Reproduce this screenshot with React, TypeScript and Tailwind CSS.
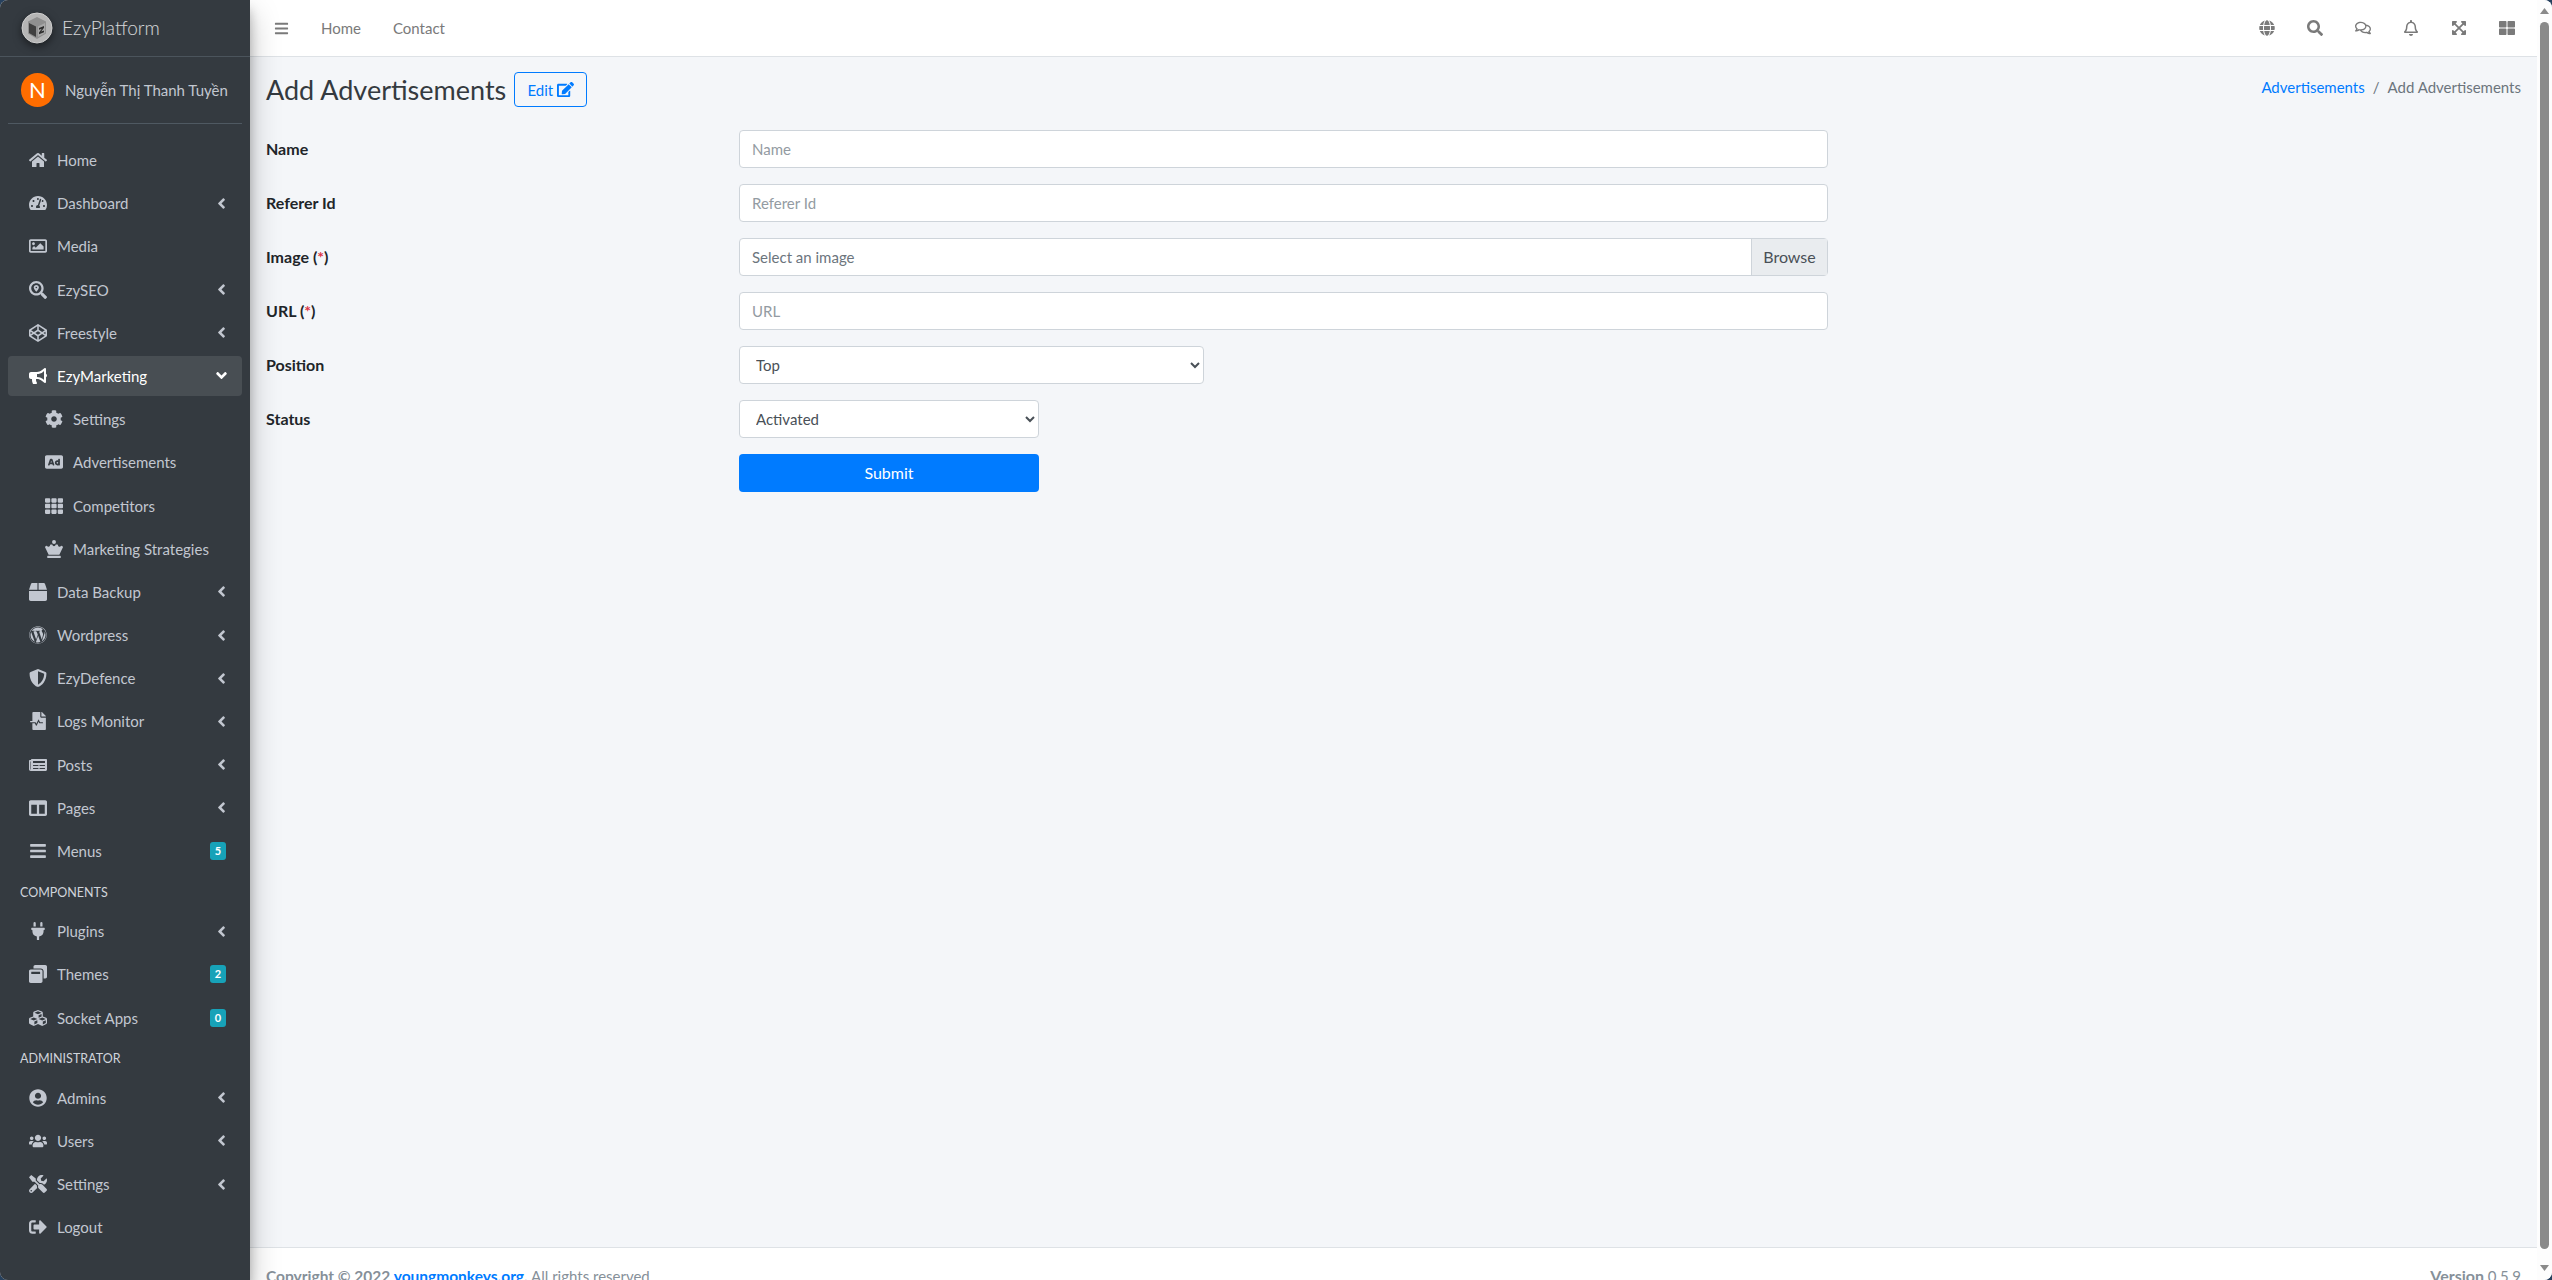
import {
  FaAd, FaAngleDown, FaAngleLeft, FaBars, FaBox, FaBullhorn, FaChessQueen, FaCodepen, FaCog, FaColumns,
  FaCubes, FaEdit, FaExpandArrowsAlt, FaFileMedicalAlt, FaGlobe, FaHome, FaNewspaper, FaPlug, FaRegBell,
  FaRegComments, FaRegImage, FaSearch, FaSearchLocation, FaShieldAlt, FaSignOutAlt, FaTachometerAlt, FaTh,
  FaThLarge, FaTools, FaUserCircle, FaUsers, FaWindowRestore, FaWordpress,
} from "react-icons/fa";
import type { IconType } from "react-icons";

interface NavRow {
  label: string;
  icon: IconType;
  arrow?: boolean;
  badge?: string;
  active?: boolean;
  sub?: boolean;
}

const mainNav: NavRow[] = [
  { label: "Home", icon: FaHome },
  { label: "Dashboard", icon: FaTachometerAlt, arrow: true },
  { label: "Media", icon: FaRegImage },
  { label: "EzySEO", icon: FaSearchLocation, arrow: true },
  { label: "Freestyle", icon: FaCodepen, arrow: true },
  { label: "EzyMarketing", icon: FaBullhorn, arrow: true, active: true },
  { label: "Settings", icon: FaCog, sub: true },
  { label: "Advertisements", icon: FaAd, sub: true },
  { label: "Competitors", icon: FaTh, sub: true },
  { label: "Marketing Strategies", icon: FaChessQueen, sub: true },
  { label: "Data Backup", icon: FaBox, arrow: true },
  { label: "Wordpress", icon: FaWordpress, arrow: true },
  { label: "EzyDefence", icon: FaShieldAlt, arrow: true },
  { label: "Logs Monitor", icon: FaFileMedicalAlt, arrow: true },
  { label: "Posts", icon: FaNewspaper, arrow: true },
  { label: "Pages", icon: FaColumns, arrow: true },
  { label: "Menus", icon: FaBars, badge: "5" },
];

const componentNav: NavRow[] = [
  { label: "Plugins", icon: FaPlug, arrow: true },
  { label: "Themes", icon: FaWindowRestore, badge: "2" },
  { label: "Socket Apps", icon: FaCubes, badge: "0" },
];

const adminNav: NavRow[] = [
  { label: "Admins", icon: FaUserCircle, arrow: true },
  { label: "Users", icon: FaUsers, arrow: true },
  { label: "Settings", icon: FaTools, arrow: true },
  { label: "Logout", icon: FaSignOutAlt },
];

function SidebarRow({ row }: { row: NavRow }) {
  const Icon = row.icon;
  return (
    <a
      className={
        "flex h-10 items-center rounded mb-[3.2px] " +
        (row.active ? "bg-white/10 text-white" : "text-[#c2c7d0]")
      }
    >
      <span className={"flex w-[20px] justify-center shrink-0 text-[18px] " + (row.sub ? "ml-[36px]" : "ml-[20px]")}>
        <Icon />
      </span>
      <span className="ml-[9px] flex-1 whitespace-nowrap">{row.label}</span>
      {row.arrow && (
        <span className="mr-[12px] text-[17px]">{row.active ? <FaAngleDown /> : <FaAngleLeft />}</span>
      )}
      {row.badge && (
        <span className="mr-[16px] flex h-[18px] w-4 items-center justify-center rounded-[3px] bg-[#17a2b8] text-[11px] font-bold text-white">
          {row.badge}
        </span>
      )}
    </a>
  );
}

function Logo() {
  return (
    <svg width="34" height="34" viewBox="0 0 34 34" className="shrink-0 drop-shadow-[0_3px_4px_rgba(0,0,0,0.5)]">
      <circle cx="17" cy="17" r="15" fill="#b5b5b5" />
      <circle cx="17" cy="17" r="15" fill="none" stroke="#d0d0d0" strokeWidth="1" />
      <path d="M17 6l9 4.500v12L17 28l-9-5.500v-12z" fill="#8f8f8f" />
      <path d="M9 12l7 3.500V26l-7-4z" fill="#3f3f3f" />
      <path d="M18 15.500l7-3.500v10l-7 4z" fill="#a8a8a8" />
      <path d="M19 17l5-2v1.800l-2.800 3.600 2.800-1v1.800l-5 2v-1.800l2.800-3.600-2.800 1z" fill="#2e2e2e" />
    </svg>
  );
}

function Sidebar() {
  return (
    <aside className="relative z-10 flex w-[250px] shrink-0 flex-col overflow-hidden bg-[#343a40] shadow-[0_14px_28px_rgba(0,0,0,0.25),0_10px_10px_rgba(0,0,0,0.22)]">
      <div className="flex h-[57px] shrink-0 items-center gap-[8px] border-b border-[#4b545c] pl-[20px]">
        <Logo />
        <span className="text-[19px] font-light text-white/80">EzyPlatform</span>
      </div>
      <div className="mx-2 flex h-[67px] shrink-0 items-center border-b border-[#4f5962] pl-[13px]">
        <span className="flex h-[34px] w-[33px] items-center justify-center rounded-full bg-[#ff6d00] text-[22px] text-white">
          N
        </span>
        <span className="ml-[11px] whitespace-nowrap text-[#c2c7d0]">Nguyễn Thị Thanh Tuyền</span>
      </div>
      <nav className="mt-4 px-2">
        {mainNav.map((row) => (
          <SidebarRow key={row.label} row={row} />
        ))}
        <div className="flex h-[37px] items-center pl-3 text-[12.500px] text-[#d0d4db]">COMPONENTS</div>
        {componentNav.map((row) => (
          <SidebarRow key={row.label} row={row} />
        ))}
        <div className="flex h-[37px] items-center pl-3 text-[12.500px] text-[#d0d4db]">ADMINISTRATOR</div>
        {adminNav.map((row) => (
          <SidebarRow key={row.label} row={row} />
        ))}
      </nav>
    </aside>
  );
}

function Header() {
  const icons = [FaGlobe, FaSearch, FaRegComments, FaRegBell, FaExpandArrowsAlt, FaThLarge];
  return (
    <header className="flex h-[57px] shrink-0 items-center border-b border-[#dee2e6] bg-white pl-[24px] pr-[22px] text-[#7a7a7a]">
      <FaBars className="text-[15px]" />
      <span className="ml-[32px]">Home</span>
      <span className="ml-[32px]">Contact</span>
      <div className="ml-auto flex items-center gap-[32px] text-[16px]">
        {icons.map((Icon, i) => (
          <Icon key={i} />
        ))}
      </div>
    </header>
  );
}

function FormRow({ label, children }: { label: React.ReactNode; children: React.ReactNode }) {
  return (
    <div className="mb-4 flex items-center">
      <label className="w-[473px] shrink-0 text-[16px] font-bold text-[#212529]">{label}</label>
      {children}
    </div>
  );
}

const inputClass =
  "h-[38px] w-[1089px] rounded border border-[#ced4da] bg-white px-3 text-[#495057] placeholder:text-[#939ba2]";

function AddForm() {
  return (
    <form className="mt-[23px]">
      <FormRow label="Name">
        <input className={inputClass} placeholder="Name" />
      </FormRow>
      <FormRow label="Referer Id">
        <input className={inputClass} placeholder="Referer Id" />
      </FormRow>
      <FormRow
        label={
          <>
            Image (<span className="text-[#dc3545]">*</span>)
          </>
        }
      >
        <div className="flex h-[38px] w-[1089px] rounded border border-[#ced4da] bg-white">
          <span className="flex flex-1 items-center px-3 text-[#6c757d]">Select an image</span>
          <span className="flex w-[76px] items-center justify-center border-l border-[#ced4da] bg-[#e9ecef] text-[16px] text-[#495057]">
            Browse
          </span>
        </div>
      </FormRow>
      <FormRow
        label={
          <>
            URL (<span className="text-[#dc3545]">*</span>)
          </>
        }
      >
        <input className={inputClass} placeholder="URL" />
      </FormRow>
      <FormRow label="Position">
        <select className="h-[38px] w-[465px] rounded border border-[#ced4da] bg-white px-3 text-[#495057]">
          <option>Top</option>
        </select>
      </FormRow>
      <FormRow label="Status">
        <select className="h-[38px] w-[300px] rounded border border-[#ced4da] bg-white px-3 text-[#495057]">
          <option>Activated</option>
        </select>
      </FormRow>
      <div className="flex">
        <div className="w-[473px] shrink-0" />
        <button type="button" className="h-[38px] w-[300px] rounded bg-[#007bff] text-[16px] text-white">
          Submit
        </button>
      </div>
    </form>
  );
}

function Scrollbar() {
  return (
    <div className="flex w-[15px] shrink-0 flex-col items-center bg-[#fdfdfd] pt-[8px] pb-[9px]">
      <svg width="9" height="6" viewBox="0 0 9 6" className="shrink-0">
        <path d="M4.500 0L9 6H0z" fill="#8a8a8a" />
      </svg>
      <div className="mt-[8px] h-[1227px] w-[9px] shrink-0 rounded-full bg-[#8a8a8a]" />
      <svg width="9" height="6" viewBox="0 0 9 6" className="mt-auto shrink-0">
        <path d="M0 0h9L4.500 6z" fill="#8a8a8a" />
      </svg>
    </div>
  );
}

export default function App() {
  return (
    <div className="h-screen bg-[#27415e]">
      <div className="flex h-full overflow-hidden rounded-lg bg-[#f4f6f9] font-['Lato','Noto_Sans',sans-serif] text-[15px] leading-6 text-[#212529]">
        <Sidebar />
        <div className="flex min-w-0 flex-1 flex-col">
          <Header />
          <main className="flex-1 px-4">
            <div className="flex items-center justify-between pt-[15px]">
              <div className="flex items-center">
                <h1 className="text-[27px] leading-[35px] font-normal text-[#343a40]">Add Advertisements</h1>
                <button
                  type="button"
                  className="ml-2 flex h-[35px] w-[73px] items-center justify-center gap-1 rounded border border-[#007bff] text-[#007bff]"
                >
                  Edit <FaEdit className="text-[17px]" />
                </button>
              </div>
              <div className="mb-[5px] flex items-center">
                <a className="text-[#007bff]">Advertisements</a>
                <span className="mx-2 text-[#6c757d]">/</span>
                <span className="text-[#6c757d]">Add Advertisements</span>
              </div>
            </div>
            <AddForm />
          </main>
          <footer className="flex h-[33px] shrink-0 justify-between overflow-hidden border-t border-[#dee2e6] bg-white px-4 pt-4 text-[#869099]">
            <span className="whitespace-nowrap">
              <b className="text-[15.500px]">
                Copyright © 2022 <a className="text-[#007bff]">youngmonkeys.org</a>.
              </b>{" "}
              All rights reserved.
            </span>
            <span className="whitespace-nowrap">
              <b className="text-[16px]">Version</b> 0.5.9
            </span>
          </footer>
        </div>
        <Scrollbar />
      </div>
    </div>
  );
}
